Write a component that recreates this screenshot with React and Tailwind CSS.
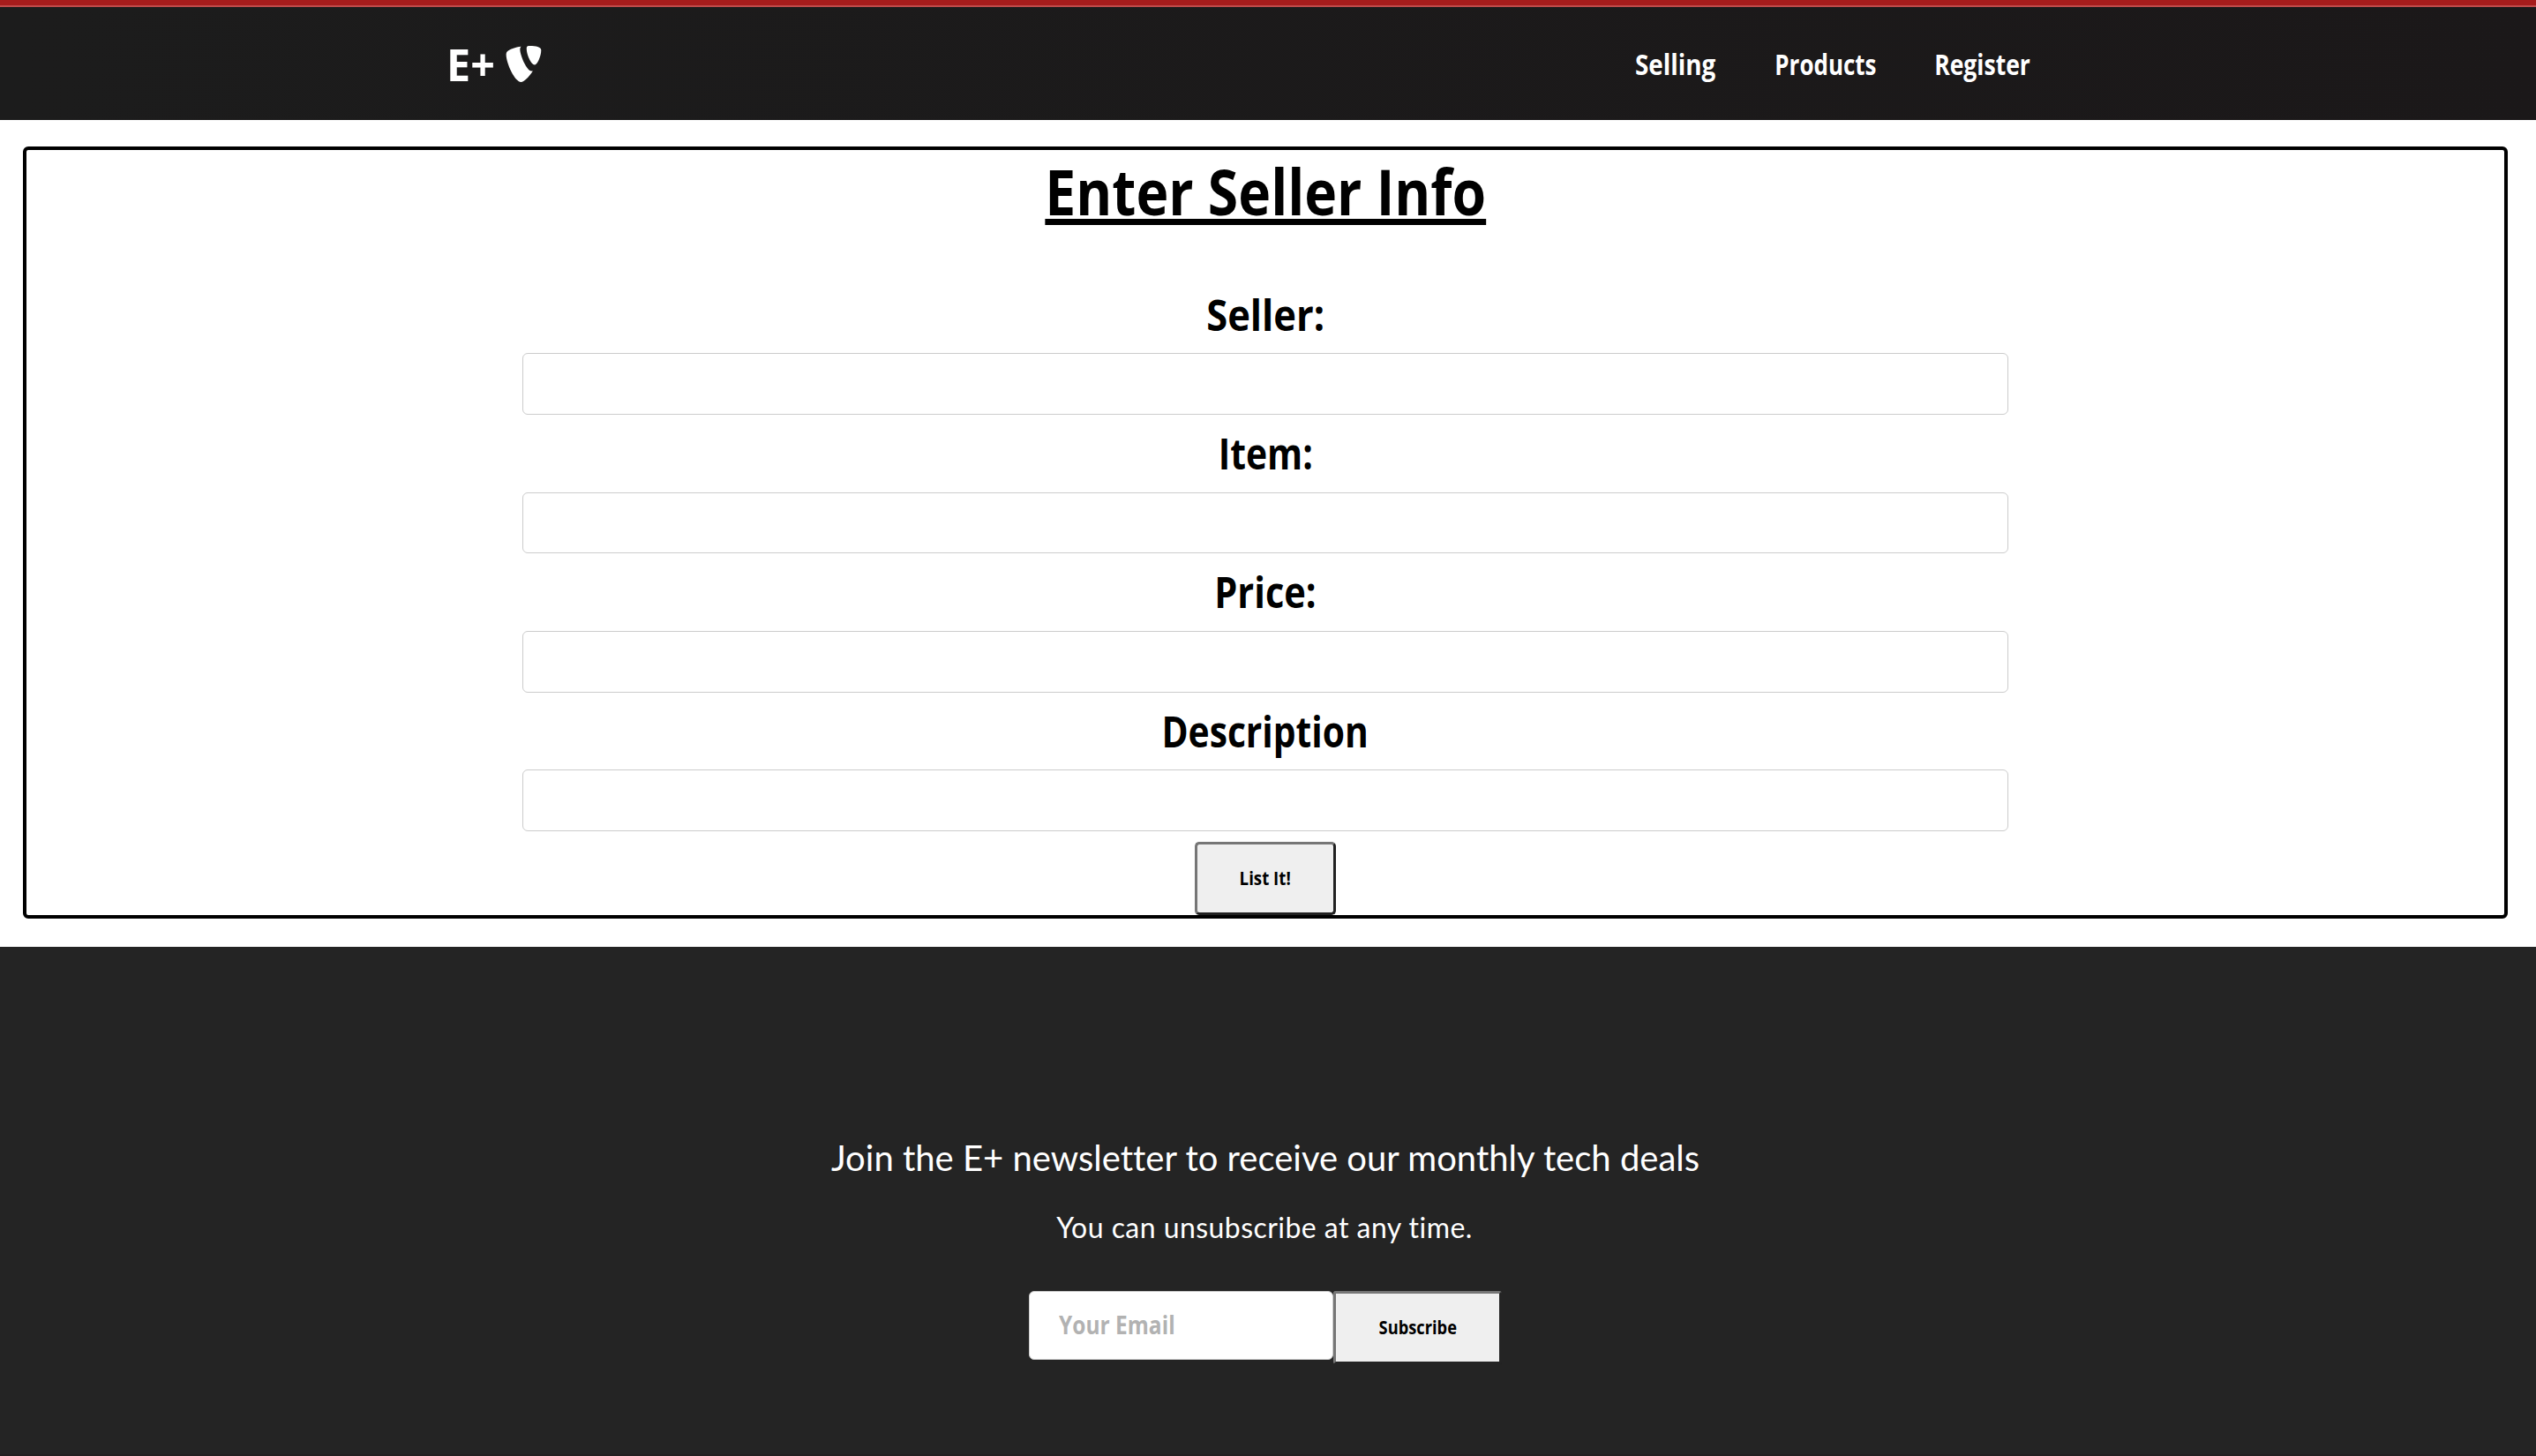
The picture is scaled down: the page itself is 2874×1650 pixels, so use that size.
import { FaTypo3 } from 'react-icons/fa';

const navLinks = [
  { label: 'Selling', box: 'w-[90px] mr-[68px]', stretch: 'scale-x-[0.885]' },
  { label: 'Products', box: 'w-[114px] mr-[67px]', stretch: 'scale-x-[0.824]' },
  { label: 'Register', box: 'w-[107px] mr-px', stretch: 'scale-x-[0.843]' },
];

const fields = [
  { label: 'Seller:', stretch: 'scale-x-[0.915]' },
  { label: 'Item:', stretch: 'scale-x-[0.86]' },
  { label: 'Price:', stretch: 'scale-x-[0.875]' },
  { label: 'Description', stretch: 'scale-x-[0.858]' },
];

function Header() {
  return (
    <header className="relative flex h-[136px] items-center border-t-8 border-[#a61c1c] bg-linear-to-r from-[#1c1c1c] to-[#1b1819] text-white">
      <div className="absolute -top-[2px] left-0 h-[2px] w-full bg-[#bf4b4b]" />
      <div className="ml-[506px] flex w-[1795px] items-center justify-between">
        <a className="flex items-center">
          <span className="w-[67px] origin-left scale-x-[0.95] text-[51px] leading-none font-bold">E+</span>
          <FaTypo3 className="h-[47px] w-[41px]" />
        </a>
        <nav className="flex pt-[2px]">
          {navLinks.map((link) => (
            <a key={link.label} className={`flex justify-center text-[31.5px] leading-none font-bold ${link.box}`}>
              <span className={link.stretch}>{link.label}</span>
            </a>
          ))}
        </nav>
      </div>
    </header>
  );
}

function SellerForm() {
  return (
    <form className="mt-[30px] mr-[32px] mb-8 ml-[26px] flex h-[875px] flex-col items-center rounded-[6px] border-4 border-black text-black">
      <h1 className="mb-[49.57px] scale-x-[0.873] pt-px text-[71.5px] leading-[92px] font-bold underline decoration-[7px] underline-offset-[4px] [text-decoration-skip-ink:none]">
        Enter Seller Info
      </h1>
      {fields.map((field) => (
        <label key={field.label} className="flex flex-col items-center">
          <span className={`text-[47.5px] leading-[87.83px] font-bold ${field.stretch}`}>{field.label}</span>
          <input className="h-[69.5px] w-[1684px] rounded-[6px] border border-[#cccccc] bg-white outline-none" />
        </label>
      ))}
      <button
        type="button"
        className="mt-[12px] flex h-[83px] w-[160px] shrink-0 items-center justify-center rounded-[5px] border-3 border-t-[#767676] border-r-[#212121] border-b-[#212121] border-l-[#767676] bg-[#efefef] text-[21px] leading-none font-bold"
      >
        <span className="scale-x-[0.89]">List It!</span>
      </button>
    </form>
  );
}

function Newsletter() {
  return (
    <footer className="flex h-[577px] flex-col items-center border-b-2 border-[#231f20] bg-[#242424] pt-[208.5px] pr-[6px] text-white">
      <p className="font-['Lato',sans-serif] text-[40px] leading-[60px] whitespace-nowrap [font-variant-ligatures:none]">
        Join the E+ newsletter to receive our monthly tech deals
      </p>
      <p className="mt-[29px] mr-[2px] font-['Lato',sans-serif] text-[32px] leading-10 tracking-[0.45px] whitespace-nowrap [font-variant-ligatures:none]">
        You can unsubscribe at any time.
      </p>
      <div className="mt-[52px] flex items-start">
        <div className="flex h-[78px] w-[345px] items-center rounded-[6px] border border-[#cccccc] bg-white pb-[3px] pl-[33px]">
          <span className="origin-left scale-x-[0.845] text-[29px] leading-none font-bold text-[#b2b2b2]">Your Email</span>
        </div>
        <button
          type="button"
          className="flex h-[83px] w-[191px] items-center justify-center rounded-[3px] border-3 border-t-[#767676] border-r-[#242424] border-b-[#242424] border-l-[#767676] bg-[#efefef] bg-clip-padding text-[21px] leading-none font-bold text-black"
        >
          <span className="scale-x-[0.87]">Subscribe</span>
        </button>
      </div>
    </footer>
  );
}

export default function App() {
  return (
    <div className="flow-root h-[1650px] w-[2874px] overflow-hidden bg-white font-['Open_Sans',sans-serif]">
      <Header />
      <SellerForm />
      <Newsletter />
    </div>
  );
}
